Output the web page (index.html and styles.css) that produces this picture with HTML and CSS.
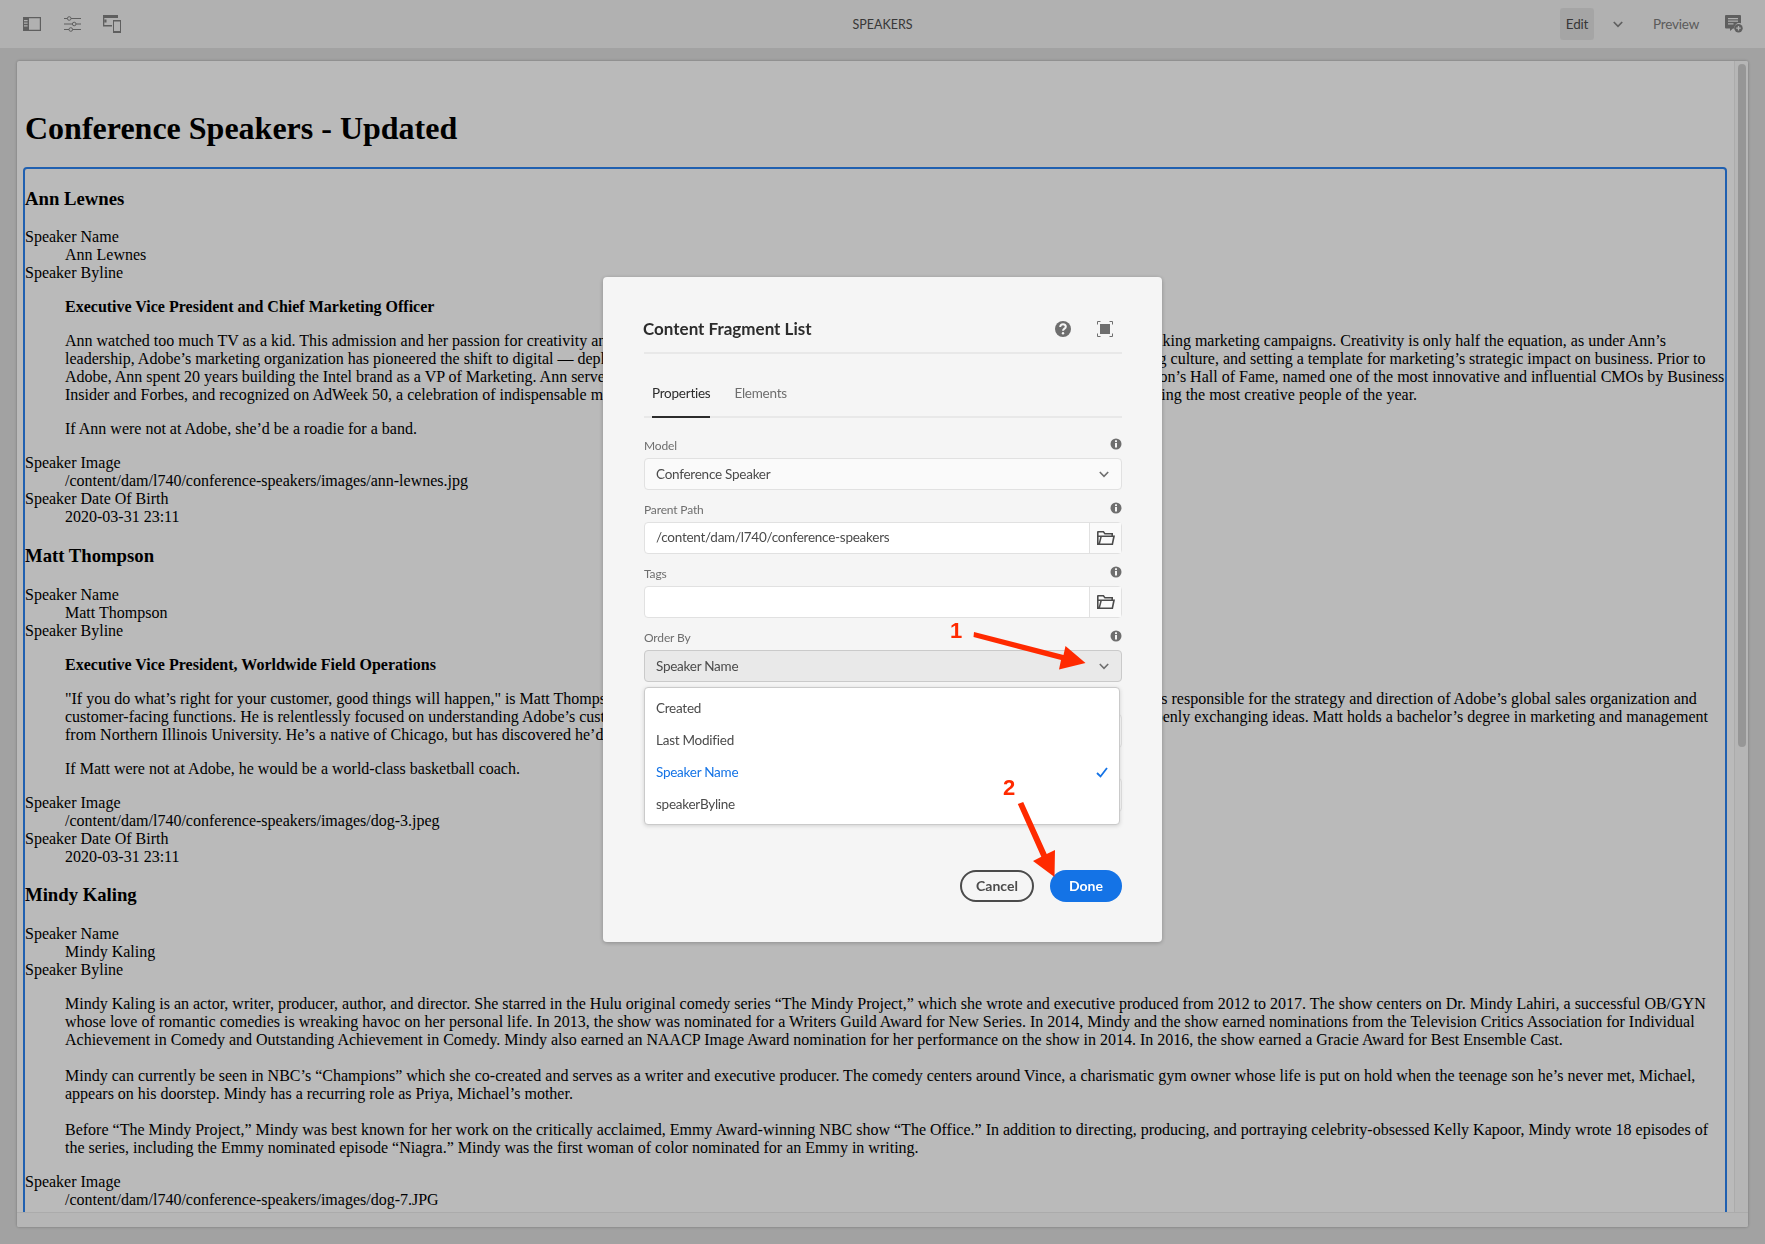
FILE: index.html
```html
<!DOCTYPE html>
<html lang="en">
<head>
<meta charset="utf-8">
<title>Speakers</title>
<link rel="stylesheet" href="styles.css">
</head>
<body>
<div class="app">
  <header class="toolbar">
    <div class="tools">
      <button class="tool"><svg class="ico" width="18" height="14" viewBox="0 0 18 14"><path fill="currentColor" d="M0 0h18v14H0zM6 1.2v11.6h10.8V1.2zM1 3v1.2h3.6V3zM1 5.6v1.2h3.6V5.6zM1 8.2v1.2h3.6V8.2z" fill-rule="evenodd"/></svg></button>
      <button class="tool"><svg class="ico" width="17" height="16" viewBox="0 0 17 16"><g fill="none" stroke="currentColor" stroke-width="1"><path d="M0 2.5h3.5M7 2.5h10M0 8h8.5M12 8h5M0 13.5h5M8.5 13.5H17"/><circle cx="5.2" cy="2.5" r="1.8"/><circle cx="10.2" cy="8" r="1.8"/><circle cx="6.8" cy="13.5" r="1.8"/></g></svg></button>
      <button class="tool"><svg class="ico" width="18" height="18" viewBox="0 0 18 18"><path fill="currentColor" fill-rule="evenodd" d="M0 0h15v3H1.3v7H9v1.4H0zM10 5h8v13h-8zM11 6.6v9.4h6V6.6zM1.5 4.5h2v3h-2z"/></svg></button>
    </div>
    <div class="page-title">SPEAKERS</div>
    <div class="actions">
      <button class="mode mode-on">Edit</button>
      <button class="tool tool-narrow"><svg class="ico" width="10" height="7" viewBox="0 0 10 7"><path fill="none" stroke="currentColor" stroke-width="1.7" d="M.8 1l4.2 4.3L9.2 1"/></svg></button>
      <button class="mode">Preview</button>
      <button class="tool tool-last"><svg class="ico" width="18" height="18" viewBox="0 0 18 18"><path fill="currentColor" fill-rule="evenodd" d="M1 0h14a1 1 0 0 1 1 1v7.2a5 5 0 0 0-6.6 5.3H8L5 16v-2.5H1a1 1 0 0 1-1-1V1a1 1 0 0 1 1-1zM3 3v1.2h10V3zM3 5.6v1.2h10V5.6zM3 8.2v1.2h5.5V8.2z"/><circle cx="13.5" cy="13.2" r="4.2" fill="currentColor"/><path stroke="#ececec" stroke-width="1.3" d="M11.2 13.2h4.6M13.5 10.9v4.6"/></svg></button>
    </div>
  </header>

  <main class="stage">
    <section class="panel">
      <div class="panel-main">
        <div class="doc">
          <h1>Conference Speakers - Updated</h1>
          <div class="list">
            <h3>Ann Lewnes</h3>
            <dl>
              <dt>Speaker Name</dt><dd>Ann Lewnes</dd>
              <dt>Speaker Byline</dt>
              <dd>
                <p><strong>Executive Vice President and Chief Marketing Officer</strong></p>
                <p>Ann watched too much TV as a kid. This admission and her passion for creativity and storytelling have been the key driving force behind her widely acclaimed groundbreaking marketing campaigns. Creativity is only half the equation, as under Ann’s<br>
                leadership, Adobe’s marketing organization has pioneered the shift to digital — deploying data science and analytics across every channel to drive a performance marketing culture, and setting a template for marketing’s strategic impact on business. Prior to<br>
                Adobe, Ann spent 20 years building the Intel brand as a VP of Marketing. Ann serves on the boards of several major companies and was inducted into the Advertising Person’s Hall of Fame, named one of the most innovative and influential CMOs by Business<br>
                Insider and Forbes, and recognized on AdWeek 50, a celebration of indispensable marketers, and on the Business Insider list of those big brands, and top agencies recognizing the most creative people of the year.</p>
                <p>If Ann were not at Adobe, she’d be a roadie for a band.</p>
              </dd>
              <dt>Speaker Image</dt><dd>/content/dam/l740/conference-speakers/images/ann-lewnes.jpg</dd>
              <dt>Speaker Date Of Birth</dt><dd>2020-03-31 23:11</dd>
            </dl>
            <h3>Matt Thompson</h3>
            <dl>
              <dt>Speaker Name</dt><dd>Matt Thompson</dd>
              <dt>Speaker Byline</dt>
              <dd>
                <p><strong>Executive Vice President, Worldwide Field Operations</strong></p>
                <p>"If you do what’s right for your customer, good things will happen," is Matt Thompson’s motto as Adobe’s Executive Vice President of a Worldwide Field Operations. He is responsible for the strategy and direction of Adobe’s global sales organization and<br>
                customer-facing functions. He is relentlessly focused on understanding Adobe’s customers and is always learning from them, listening carefully to their many needs and openly exchanging ideas. Matt holds a bachelor’s degree in marketing and management<br>
                from Northern Illinois University. He’s a native of Chicago, but has discovered he’d rather live in California.</p>
                <p>If Matt were not at Adobe, he would be a world-class basketball coach.</p>
              </dd>
              <dt>Speaker Image</dt><dd>/content/dam/l740/conference-speakers/images/dog-3.jpeg</dd>
              <dt>Speaker Date Of Birth</dt><dd>2020-03-31 23:11</dd>
            </dl>
            <h3>Mindy Kaling</h3>
            <dl>
              <dt>Speaker Name</dt><dd>Mindy Kaling</dd>
              <dt>Speaker Byline</dt>
              <dd class="bio">
                <p>Mindy Kaling is an actor, writer, producer, author, and director. She starred in the Hulu original comedy series “The Mindy Project,” which she wrote and executive produced from 2012 to 2017. The show centers on Dr. Mindy Lahiri, a successful OB/GYN whose love of romantic comedies is wreaking havoc on her personal life. In 2013, the show was nominated for a Writers Guild Award for New Series. In 2014, Mindy and the show earned nominations from the Television Critics Association for Individual Achievement in Comedy and Outstanding Achievement in Comedy. Mindy also earned an NAACP Image Award nomination for her performance on the show in 2014. In 2016, the show earned a Gracie Award for Best Ensemble Cast.</p>
                <p>Mindy can currently be seen in NBC’s “Champions” which she co-created and serves as a writer and executive producer. The comedy centers around Vince, a charismatic gym owner whose life is put on hold when the teenage son he’s never met, Michael, appears on his doorstep. Mindy has a recurring role as Priya, Michael’s mother.</p>
                <p>Before “The Mindy Project,” Mindy was best known for her work on the critically acclaimed, Emmy Award-winning NBC show “The Office.” In addition to directing, producing, and portraying celebrity-obsessed Kelly Kapoor, Mindy wrote 18 episodes of the series, including the Emmy nominated episode “Niagra.” Mindy was the first woman of color nominated for an Emmy in writing.</p>
              </dd>
              <dt>Speaker Image</dt><dd>/content/dam/l740/conference-speakers/images/dog-7.JPG</dd>
            </dl>
          </div>
        </div>
        <div class="scroll-y"><div class="thumb"></div></div>
      </div>
      <div class="scroll-x"></div>
    </section>
  </main>
</div>

<div class="overlay">
  <div class="dialog">
    <div class="dialog-head">
      <h2>Content Fragment List</h2>
      <div class="dialog-tools">
        <svg width="16" height="16" viewBox="0 0 16 16"><circle cx="8" cy="8" r="8" fill="#6e6e6e"/><path fill="none" stroke="#f5f5f5" stroke-width="2" d="M5.2 6c0-1.700 1.200-2.700 2.800-2.700S10.800 4.300 10.800 5.800c0 1.900-2.800 1.900-2.800 4"/><circle cx="8" cy="12.300" r="1.200" fill="#f5f5f5"/></svg>
        <svg width="16" height="16" viewBox="0 0 16 16"><path fill="none" stroke="#6e6e6e" d="M.5 3.500v-3h3M12.500.5h3v3M15.500 12.500v3h-3M3.500 15.500h-3v-3"/><rect x="3" y="3" width="10" height="10" fill="#6e6e6e"/></svg>
      </div>
    </div>
    <div class="tabs">
      <div class="tab tab-on">Properties</div>
      <div class="tab">Elements</div>
    </div>
    <div class="form">
      <div class="field">
        <div class="label-row"><label>Model</label><svg class="info" width="12" height="12" viewBox="0 0 12 12"><use href="#i-info"/></svg></div>
        <div class="select"><span>Conference Speaker</span><svg width="10" height="7" viewBox="0 0 10 7"><use href="#i-chev"/></svg></div>
      </div>
      <div class="field">
        <div class="label-row"><label>Parent Path</label><svg class="info" width="12" height="12" viewBox="0 0 12 12"><use href="#i-info"/></svg></div>
        <div class="picker"><div class="picker-input">/content/dam/l740/conference-speakers</div><div class="picker-btn"><svg width="18" height="14" viewBox="0 0 18 14"><use href="#i-folder"/></svg></div></div>
      </div>
      <div class="field">
        <div class="label-row"><label>Tags</label><svg class="info" width="12" height="12" viewBox="0 0 12 12"><use href="#i-info"/></svg></div>
        <div class="picker"><div class="picker-input"></div><div class="picker-btn"><svg width="18" height="14" viewBox="0 0 18 14"><use href="#i-folder"/></svg></div></div>
      </div>
      <div class="field">
        <div class="label-row"><label>Order By</label><svg class="info" width="12" height="12" viewBox="0 0 12 12"><use href="#i-info"/></svg></div>
        <div class="select select-open"><span>Speaker Name</span><svg width="10" height="7" viewBox="0 0 10 7"><use href="#i-chev"/></svg></div>
        <ul class="menu">
          <li>Created</li>
          <li>Last Modified</li>
          <li class="picked">Speaker Name<svg width="12" height="11" viewBox="0 0 12 11"><path fill="none" stroke="currentColor" stroke-width="1.800" d="M1 6l3.500 3.500L11 1"/></svg></li>
          <li>speakerByline</li>
        </ul>
      </div>
      <div class="field field-under"></div>
      <div class="field field-under"></div>
    </div>
    <div class="dialog-foot">
      <button class="btn btn-ghost">Cancel</button>
      <button class="btn btn-cta">Done</button>
    </div>
  </div>
</div>

<svg class="marks" width="1765" height="1244" viewBox="0 0 1765 1244">
  <g fill="#ff2a00" stroke="none">
    <path d="M974 632L1063.500 655 1065.500 646 1085.500 663 1059 669.500 1061 660 973.500 637z"/>
    <path d="M1017.800 804L1023.200 802 1046.700 854 1055 850 1054.500 877 1033 861 1041.300 856.800z"/>
    <text class="mark-num" x="950" y="638">1</text>
    <text class="mark-num" x="1003" y="795">2</text>
  </g>
</svg>

<svg class="defs" width="0" height="0">
  <defs>
    <g id="i-info"><circle cx="6" cy="6" r="5.500" fill="#6e6e6e"/><rect x="5" y="5" width="2" height="4.500" fill="#f5f5f5"/><rect x="5" y="2.300" width="2" height="1.800" fill="#f5f5f5"/></g>
    <path id="i-chev" fill="none" stroke="#6e6e6e" stroke-width="1.600" d="M.8 1l4.200 4.300L9.200 1"/>
    <path id="i-folder" fill="#4b4b4b" fill-rule="evenodd" d="M1 0h5.800l1.500 2H16v2.500h2L16 14H0V1a1 1 0 0 1 1-1zM1.600 1.600v2.900H14.400V3.600H7.500L6 1.600zM1.600 6.100v6.300L3.200 6.100zM4.800 6.100L3.100 12.400H14.700l1.300-6.300z"/>
  </defs>
</svg>
</body>
</html>
```

FILE: styles.css
```css
* { box-sizing: border-box; }
html, body { margin: 0; height: 100%; overflow: hidden; }
body { background: #d9d9d9; font-family: "Lato", "Liberation Sans", sans-serif; }

.app { display: flex; flex-direction: column; height: 1244px; }

.toolbar {
  flex: none; height: 48px; padding: 0 12px;
  display: grid; grid-template-columns: 1fr auto 1fr; align-items: center;
  background: #ececec; color: #6e6e6e;
}
.tools { display: flex; }
.tool {
  width: 40px; height: 48px; padding: 0; border: 0; background: none; color: #7f7f7f;
  display: flex; align-items: center; justify-content: center;
}
.tool-narrow { width: 36px; margin-left: 2px; }
.tool-last { padding-left: 2px; }
.page-title { font-size: 12.5px; color: #4b4b4b; }
.actions { display: flex; align-items: center; justify-content: flex-end; gap: 4px; }
.mode {
  width: 69px; height: 32px; padding: 0 11px 0 13px; border: 0; border-radius: 3px; background: none;
  font: 13.500px "Lato", "Liberation Sans", sans-serif; letter-spacing: -.2px; color: #7a7a7a; text-align: right;
}
.mode-on { width: 34px; padding: 0; text-align: center; background: #dddddd; color: #4b4b4b; }

.stage { flex: 1; min-height: 0; padding: 13px 17px 17px; }
.panel {
  height: 100%; display: flex; flex-direction: column; overflow: hidden;
  background: #f8f8f8; border-radius: 2px;
  box-shadow: 0 0 3px rgba(0, 0, 0, .3);
}
.panel-main { flex: 1; min-height: 0; display: flex; }
.doc {
  flex: 1; min-width: 0; overflow: hidden; padding: 28px 6px 0;
  font-family: "Liberation Serif", "Times New Roman", serif; font-size: 16px; line-height: 18px; color: #000;
}
.doc h1 { margin: 21.44px 0 19.44px 2px; font-size: 32px; line-height: 37px; }
.list { border: 2px solid #2b80eb; border-radius: 4px; margin-right: 1px; min-height: 1100px; }
.doc h3 { margin: 18.72px 0; font-size: 18.72px; line-height: 22px; }
.doc dl { margin: 16px 0; }
.doc dd { margin: 0 0 0 40px; }
.doc p { margin: 16px 0; }
.doc .bio p + p { margin-top: 18px; }
.scroll-y { flex: none; width: 14px; padding: 3px; background: #f3f3f3; border-left: 1px solid #e4e4e4; }
.thumb { width: 8px; height: 683px; border-radius: 4px; background: #c9c9c9; }
.scroll-x { flex: none; height: 15px; background: #f3f3f3; border-top: 1px solid #e4e4e4; }

.overlay {
  position: fixed; inset: 0; padding-top: 277px;
  display: flex; justify-content: center; align-items: flex-start;
  background: rgba(0, 0, 0, .25);
}
.dialog {
  width: 559px; height: 665px; padding: 40px 40px 0 41px;
  background: #f5f5f5; border-radius: 4px;
  box-shadow: 0 1px 4px rgba(0, 0, 0, .25);
  color: #4b4b4b;
}
.dialog-head {
  height: 37px; padding-bottom: 13px; border-bottom: 2px solid #e8e8e8;
  display: flex; align-items: center; justify-content: space-between;
}
.dialog-head h2 { margin: 0 0 0 -1px; font-size: 17px; font-weight: 700; color: #2c2c2c; }
.dialog-tools { display: flex; gap: 26px; margin: 1px 9px 0 0; }
.tabs { margin-top: 16px; height: 48px; padding: 0 8px; display: flex; gap: 24px; border-bottom: 2px solid #e8e8e8; }
.tab { height: 48px; padding-top: 13px; font-size: 13.500px; letter-spacing: -.25px; line-height: 20px; color: #6e6e6e; }
.tab-on { color: #2c2c2c; border-bottom: 2px solid #2c2c2c; }
.form { margin-top: 8px; }
.field { position: relative; height: 64px; }
.label-row { height: 32px; padding-top: 12px; display: flex; justify-content: space-between; }
.label-row label { font-size: 12px; letter-spacing: -.15px; line-height: 16px; color: #6e6e6e; }
.field-under::after {
  content: ""; display: block; position: absolute; right: 0; left: 0; top: 32px; height: 32px;
  background: #fafafa; border: 1px solid #e1e1e1; border-radius: 4px;
}
.select {
  height: 32px; padding: 0 12px 0 11px; display: flex; align-items: center; justify-content: space-between;
  background: #fafafa; border: 1px solid #e1e1e1; border-radius: 4px;
  font-size: 13.500px; letter-spacing: -.25px; color: #4b4b4b;
}
.select-open { background: #e9e9e9; border-color: #cacaca; }
.picker { height: 32px; display: flex; background: #fff; border: 1px solid #e1e1e1; border-radius: 4px; }
.picker-input { flex: 1; padding: 0 11px; font-size: 13.500px; letter-spacing: -.25px; line-height: 28px; color: #4b4b4b; }
.picker-btn { width: 32px; display: flex; align-items: center; justify-content: center; background: #fafafa; border-left: 1px solid #e1e1e1; }
.menu {
  position: absolute; z-index: 2; left: 0; top: 69px; width: 476px; height: 138px;
  margin: 0; padding: 4px 0; list-style: none;
  background: #fff; border: 1px solid #cacaca; border-radius: 4px;
  box-shadow: 0 1px 4px rgba(0, 0, 0, .15);
}
.menu li { height: 32px; padding: 0 11px; display: flex; align-items: center; justify-content: space-between; font-size: 13.500px; letter-spacing: -.25px; color: #4b4b4b; }
.menu .picked { color: #1473e6; }
.dialog-foot { margin-top: 60px; display: flex; justify-content: flex-end; gap: 16px; }
.btn { height: 32px; padding: 0 0 2px; border-radius: 16px; font: 700 14px "Lato", "Liberation Sans", sans-serif; }
.btn-ghost { width: 74px; background: none; border: 2px solid #4b4b4b; color: #4b4b4b; padding-bottom: 2px; }
.btn-cta { width: 72px; background: #1473e6; border: 0; color: #fff; }

.marks { position: fixed; left: 0; top: 0; pointer-events: none; }
.mark-num { font: 700 22px "Liberation Sans", Arial, sans-serif; }
.defs { position: absolute; }
```
